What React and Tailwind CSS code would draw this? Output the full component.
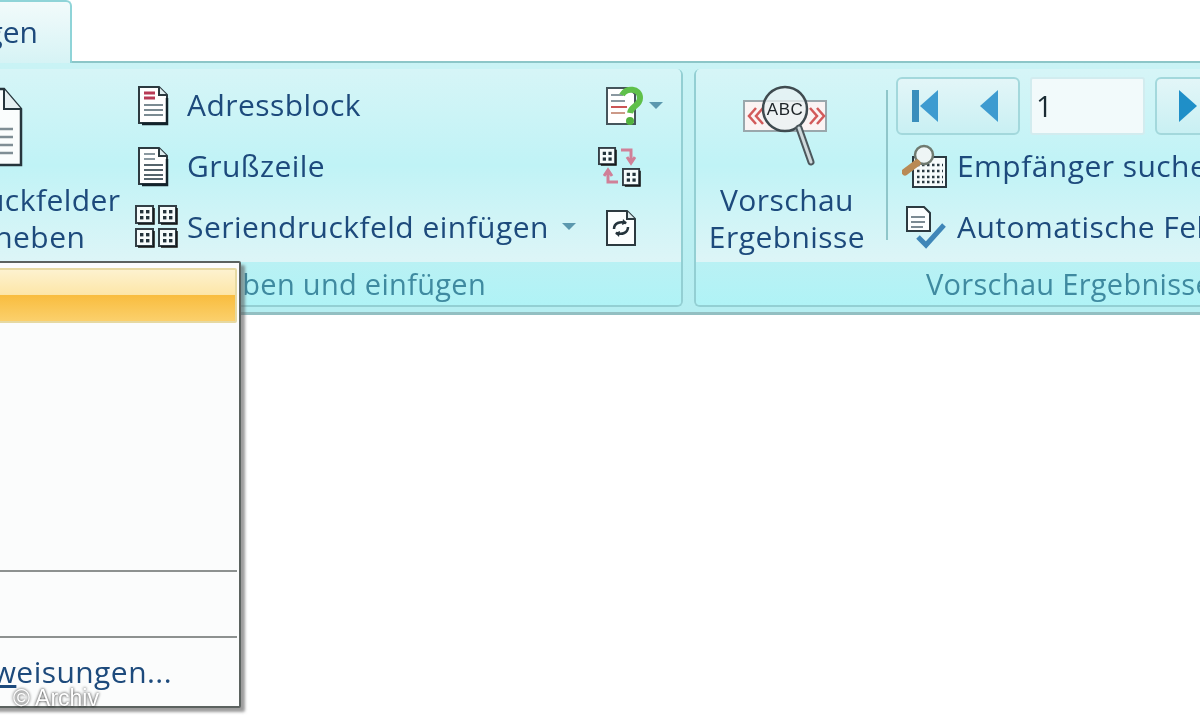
const F = "[font-family:'Open_Sans',sans-serif] font-medium";

function Doc({ variant }) {
  return (
    <svg width="36" height="42" viewBox="0 0 36 42" className="shrink-0">
      <path d="M4 3h20l8 8v28H4z" fill="#fff" stroke="#2c3a40" strokeWidth="2" />
      <path d="M32 14v26H7" fill="none" stroke="#12222a" strokeWidth="2.5" />
      <path d="M24 3v8h8" fill="#dfeef0" stroke="#2c3a40" strokeWidth="2" />
      {variant === "addr" ? (
        <>
          <path d="M9 9h11M9 14h11" stroke="#b83a55" strokeWidth="3" />
          <path d="M9 21h19M9 26h19M9 31h19" stroke="#7a8a92" strokeWidth="2" />
        </>
      ) : (
        <>
          <path d="M9 9h11M9 14h11" stroke="#8a98a0" strokeWidth="2" />
          <path d="M9 20h19M9 25h19M9 30h19M9 34h19" stroke="#55646c" strokeWidth="2.2" />
        </>
      )}
    </svg>
  );
}

function Cell({ s = 20 }) {
  return (
    <svg width={s} height={s} viewBox="0 0 20 20">
      <rect x="1" y="1" width="17" height="17" fill="#f6fbfb" stroke="#333f46" strokeWidth="2" />
      <path d="M19 3v16H3" fill="none" stroke="#111" strokeWidth="1.5" />
      <rect x="5" y="5" width="3.4" height="3.4" fill="#23333b" />
      <rect x="11" y="5" width="3.4" height="3.4" fill="#23333b" />
      <rect x="5" y="11" width="3.4" height="3.4" fill="#23333b" />
      <rect x="11" y="11" width="3.4" height="3.4" fill="#23333b" />
    </svg>
  );
}

function Caret() {
  return <span className="block w-0 h-0 border-x-[7px] border-x-transparent border-t-[7px] border-t-[#5b98ae]" />;
}

function RowItem({ icon, children, tail }) {
  return (
    <div className={`h-[61px] flex items-center text-[30px] leading-none whitespace-nowrap text-[#1d4a7c] ${F}`}>
      <div className="w-[62px] pl-[10px] flex justify-start shrink-0">{icon}</div>
      <span className="tracking-[0.45px]">{children}</span>
      {tail}
    </div>
  );
}

function Label({ children, className = "" }) {
  return (
    <div className={`h-[43px] flex items-center bg-gradient-to-b from-[#b9f1f4] to-[#b0f3f6] text-[#3f8aa0] text-[29px] leading-none whitespace-nowrap tracking-[0.3px] ${F} ${className}`}>
      {children}
    </div>
  );
}

export default function App() {
  return (
    <div className="relative w-[1200px] h-[720px] overflow-hidden bg-white blur-[0.7px]">
      {/* tab strip */}
      <div className="h-[63px] flex items-end">
        <div className={`w-[72px] h-[63px] flex justify-end items-center pr-[32px] pb-[1px] overflow-hidden whitespace-nowrap bg-gradient-to-b from-[#f2fbfb] to-[#d6f3f5] border-r-2 border-t-2 border-[#8fd4d8] rounded-tr-[6px] text-[30px] leading-none text-[#1d4a7c] ${F}`}>
          Sendungen
        </div>
        <div className="flex-1 h-[2px] bg-[#8cc6c8]" />
      </div>

      {/* ribbon */}
      <div className="h-[252px] flex gap-[11px] pt-[6px] bg-gradient-to-b from-[#c9f3f5] to-[#b5eef1] border-b-[3px] border-[#93bfc2] overflow-hidden">
        {/* group 1 */}
        <div className="w-[683px] shrink-0 h-[238px] flex flex-col rounded-r-[6px] border-r-2 border-b-2 border-[#93cfd3] overflow-hidden">
          <div className="h-[193px] flex bg-gradient-to-b from-[#d6f5f7] via-[#c0f3f6] to-[#ddf5f7]">
            <div className="w-[128px] shrink-0 overflow-hidden">
              <div className={`-ml-[128px] w-[240px] flex flex-col items-center text-[#1d4a7c] text-[30px] tracking-[0.45px] leading-[37px] ${F}`}>
                <svg width="60" height="80" viewBox="0 0 60 80" className="mt-[18px] ml-[2px]">
                  <path d="M3 2h38l17 20v56H3z" fill="#fafdfd" stroke="#26353c" strokeWidth="2.5" />
                  <path d="M41 2v20h17" fill="#e6f0f2" stroke="#26353c" strokeWidth="2" />
                  <path d="M10 42h40M10 50h40M10 58h40M10 66h40" stroke="#7f8e95" strokeWidth="2.5" />
                </svg>
                <div className="mt-[14px] text-center whitespace-nowrap">Seriendruckfelder</div>
                <div className="text-center whitespace-nowrap">hervorheben</div>
              </div>
            </div>
            <div className="w-[452px] shrink-0 pt-[5px] -ml-[3px]">
              <RowItem icon={<Doc variant="addr" />}>Adressblock</RowItem>
              <RowItem icon={<Doc />}>Grußzeile</RowItem>
              <RowItem
                icon={
                  <div className="grid grid-cols-2 gap-[3px]">
                    <Cell /><Cell /><Cell /><Cell />
                  </div>
                }
                tail={<span className="ml-[13px]"><Caret /></span>}
              >
                Seriendruckfeld einfügen
              </RowItem>
            </div>
            <div className="flex-1 pt-[6px] pl-[28px]">
              <div className="h-[61px] flex items-center gap-[4px]">
                <svg width="40" height="42" viewBox="0 0 40 42">
                  <path d="M2 3h22l6 6v30H2z" fill="#fff" stroke="#45555c" strokeWidth="2" />
                  <path d="M6 10h12M6 16h14" stroke="#8a98a0" strokeWidth="2" />
                  <path d="M6 22h16" stroke="#c55" strokeWidth="2" />
                  <path d="M6 28h14" stroke="#c98" strokeWidth="2" />
                  <path d="M17 10c4-8 18-7 18 3 0 8-9 8-10 15" fill="none" stroke="#5fc04a" strokeWidth="6" />
                  <circle cx="25" cy="36" r="4" fill="#52b23e" />
                </svg>
                <Caret />
              </div>
              <div className="h-[61px] flex flex-col justify-center -ml-[7px] w-[46px]">
                <div className="flex items-center gap-[3px]"><Cell s={19} />
                  <svg width="16" height="20" viewBox="0 0 16 20"><path d="M1 4h10v11M7 11l4 6 4-6" fill="none" stroke="#d08098" strokeWidth="3" /></svg>
                </div>
                <div className="flex items-center gap-[3px] ml-[5px] mt-[1px]">
                  <svg width="16" height="20" viewBox="0 0 16 20"><path d="M15 15H5V5M1 9l4-6 4 6" fill="none" stroke="#d08098" strokeWidth="3" /></svg>
                  <Cell s={19} />
                </div>
              </div>
              <div className="h-[61px] flex items-center">
                <svg width="32" height="38" viewBox="0 0 32 38">
                  <path d="M2 2h20l8 8v26H2z" fill="#fbfefe" stroke="#2c3a40" strokeWidth="2" />
                  <path d="M22 2v8h8" fill="#dfeef0" stroke="#2c3a40" strokeWidth="2" />
                  <path d="M9 20c0-6 6-8 12-6M23 18c0 6-6 8-12 6" fill="none" stroke="#23333b" strokeWidth="2.5" />
                  <path d="M18 10l4 4-5 2M14 28l-4-4 5-2" fill="#23333b" />
                </svg>
              </div>
            </div>
          </div>
          <Label className="justify-end pr-[195px]">Felder schreiben und einfügen</Label>
        </div>

        {/* group 2 */}
        <div className="w-[748px] shrink-0 h-[238px] flex flex-col rounded-l-[6px] border-l-2 border-b-2 border-[#93cfd3] overflow-hidden">
          <div className="h-[193px] flex bg-gradient-to-b from-[#d6f5f7] via-[#c0f3f6] to-[#ddf5f7]">
            <div className={`w-[182px] mr-[8px] shrink-0 flex flex-col items-center text-[#1d4a7c] text-[30px] tracking-[0.45px] leading-[37px] ${F}`}>
              <svg width="90" height="86" viewBox="0 0 90 86" className="mt-[15px]">
                <rect x="2" y="17" width="82" height="30" fill="#fbf3f3" stroke="#9aa7ac" strokeWidth="2" />
                <path d="M14 24l-7 8 7 8M21 24l-7 8 7 8M68 24l7 8-7 8M75 24l7 8-7 8" fill="none" stroke="#d25a5a" strokeWidth="2.5" />
                <circle cx="43" cy="25" r="22" fill="#e9f2f3" fillOpacity="0.75" stroke="#3f4b50" strokeWidth="2.5" />
                <text x="43" y="31" textAnchor="middle" fontSize="17" fontWeight="400" fontFamily="Liberation Sans" fill="#1d2327">ABC</text>
                <path d="M57 44l12 34" stroke="#4c585d" strokeWidth="7" strokeLinecap="round" />
                <path d="M57 44l12 34" stroke="#cfd9dc" strokeWidth="3" strokeLinecap="round" />
              </svg>
              <div className="mt-[11px] text-center whitespace-nowrap">Vorschau</div>
              <div className="text-center whitespace-nowrap">Ergebnisse</div>
            </div>
            <div className="w-[2px] h-[150px] mt-[21px] bg-[#8fc6ca] shrink-0" />
            <div className="flex-1 pl-[8px] pt-[8px]">
              <div className="flex gap-[10px] h-[58px]">
                <div className="w-[124px] flex rounded-[6px] border-2 border-[#a3d8dc] bg-gradient-to-b from-[#e3f6f8] to-[#c9f0f3]">
                  <div className="flex-1 flex items-center justify-center gap-[1px] -ml-[2px]">
                    <span className="w-[7px] h-[32px] bg-[#3a8ebc]" />
                    <span className="w-0 h-0 border-y-[16px] border-y-transparent border-r-[18px] border-r-[#3d9bd0]" />
                  </div>
                  <div className="flex-1 flex items-center justify-center pl-[6px]">
                    <span className="w-0 h-0 border-y-[16px] border-y-transparent border-r-[18px] border-r-[#3d9bd0]" />
                  </div>
                </div>
                <div className={`w-[115px] flex items-center pl-[4px] rounded-[3px] border-2 border-[#d2ecef] bg-[#f2fafb] text-[#1a2a33] text-[29px] ${F}`}>1</div>
                <div className="w-[124px] flex items-center pl-[22px] rounded-[6px] border-2 border-[#a3d8dc] bg-gradient-to-b from-[#e3f6f8] to-[#c9f0f3]">
                  <span className="w-0 h-0 border-y-[16px] border-y-transparent border-l-[18px] border-l-[#1f8fc8]" />
                </div>
              </div>
              <div className={`h-[61px] flex items-center text-[30px] leading-none whitespace-nowrap text-[#1d4a7c] ${F}`}>
                <svg width="46" height="46" viewBox="0 0 46 46" className="shrink-0 ml-[6px]">
                  <rect x="11" y="14" width="33" height="30" fill="#f6fbfb" stroke="#2a3a42" strokeWidth="2" />
                  <path d="M15 22h26M15 28h26M15 34h26M15 39h26" stroke="#2a3a42" strokeWidth="2.5" strokeDasharray="2.5 2.5" />
                  <circle cx="22" cy="12" r="9" fill="#eef5f5" stroke="#6f7a70" strokeWidth="2.5" />
                  <path d="M15 20L3 29" stroke="#b98a55" strokeWidth="7" strokeLinecap="round" />
                </svg>
                <span className="ml-[9px] tracking-[0.45px]">Empfänger suchen</span>
              </div>
              <div className={`h-[61px] flex items-center text-[30px] leading-none whitespace-nowrap text-[#1d4a7c] ${F}`}>
                <svg width="46" height="44" viewBox="0 0 46 44" className="shrink-0 ml-[8px]">
                  <path d="M3 2h17l6 6v18H3z" fill="#fbfefe" stroke="#2c3a40" strokeWidth="2" />
                  <path d="M7 12h14M7 17h14M7 22h12" stroke="#7a8a92" strokeWidth="2" />
                  <path d="M14 32l8 8 18-20" fill="none" stroke="#3f86b8" strokeWidth="5" />
                </svg>
                <span className="ml-[7px] tracking-[0.45px]">Automatische Fehlerüberprüfung</span>
              </div>
            </div>
          </div>
          <Label className="justify-center">Vorschau Ergebnisse</Label>
        </div>
      </div>

      {/* dropdown menu */}
      <div className="absolute left-[-10px] top-[261px] w-[251px] h-[447px] flex flex-col px-[2px] pt-[5px] bg-[#fbfcfc] border-2 border-[#5b625f] rounded-[2px] shadow-[4px_4px_3px_rgba(90,90,90,0.6)]">
        <div className="h-[55px] shrink-0 rounded-[2px] border-2 border-[#e6d9a2] bg-[linear-gradient(#fdf2cf_0%,#fde6a8_48%,#f9bd3f_50%,#fbd06c_100%)]" />
        <div className="flex-1" />
        <div className="h-[2px] bg-[#8d9190] shrink-0" />
        <div className="h-[64px] shrink-0" />
        <div className="h-[2px] bg-[#8d9190] shrink-0" />
        <div className={`h-[68px] shrink-0 flex items-center justify-end pr-[65px] pb-[1px] overflow-hidden whitespace-nowrap text-[30px] tracking-[0.45px] leading-none text-[#1d4a7c] ${F}`}>
          <span>An<span className="underline">w</span>eisungen...</span>
        </div>
      </div>

      <div className="absolute left-[13px] top-[686px] text-[23px] leading-[24px] text-white font-['Liberation_Sans',sans-serif] [text-shadow:0_0_3px_#111]">
        © Archiv
      </div>
    </div>
  );
}
